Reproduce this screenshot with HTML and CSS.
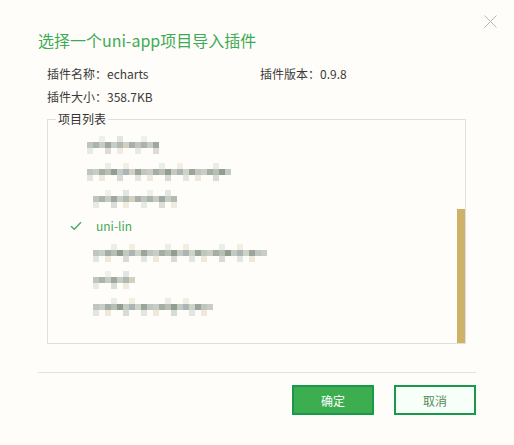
FILE: index.html
```html
<!DOCTYPE html>
<html lang="zh-CN">
<head>
<meta charset="utf-8">
<title>导入插件</title>
<link rel="stylesheet" href="styles.css">
</head>
<body>
<div class="dialog">
  <button class="close" aria-label="关闭">
    <svg width="13" height="13" viewBox="0 0 13 13"><path d="M0.5 0.5L12.5 12.5M12.5 0.5L0.5 12.5" stroke="#b4b4b4" stroke-width="1" fill="none"/></svg>
  </button>
  <h1 class="title">选择一个uni-app项目导入插件</h1>
  <div class="info">
    <div>插件名称：echarts</div>
    <div>插件版本：0.9.8</div>
    <div>插件大小：358.7KB</div>
  </div>
  <fieldset class="projects">
    <legend>项目列表</legend>
    <ul class="list">
      <li class="item"><span class="check"></span><span class="blur w72 shift"></span></li>
      <li class="item"><span class="check"></span><span class="blur w144 shift alt"></span></li>
      <li class="item"><span class="check"></span><span class="blur w84"></span></li>
      <li class="item selected"><span class="check"><svg width="12" height="10" viewBox="0 0 12 10"><path d="M1 5.2L4.3 8.3L11 1.2" stroke="#3fae5e" stroke-width="1.4" fill="none"/></svg></span><span class="name">uni-lin</span></li>
      <li class="item"><span class="check"></span><span class="blur w174 alt"></span></li>
      <li class="item"><span class="check"></span><span class="blur w42"></span></li>
      <li class="item"><span class="check"></span><span class="blur w120 alt"></span></li>
    </ul>
    <div class="thumb"></div>
  </fieldset>
  <div class="footer">
    <button class="btn primary">确定</button>
    <button class="btn ghost">取消</button>
  </div>
</div>
</body>
</html>
```

FILE: styles.css
```css
* { box-sizing: border-box; }
html, body {
  margin: 0;
  padding: 0;
  background: #fffdf9;
}
body {
  font-family: "Noto Sans CJK SC", "Noto Sans", sans-serif;
  color: #3c3c3c;
}
.dialog {
  position: relative;
  width: 514px;
  height: 445px;
  padding: 28px 38px 0 38px;
}
.close {
  position: absolute;
  top: 15px;
  right: 17px;
  width: 13px;
  height: 13px;
  padding: 0;
  border: 0;
  background: none;
  display: block;
}
.close svg { display: block; }
.title {
  margin: 0;
  font-size: 16px;
  line-height: 24px;
  font-weight: normal;
  color: #3eaa55;
}
.info {
  margin-top: 10px;
  padding-left: 9px;
  display: grid;
  grid-template-columns: 213px auto;
  font-size: 12px;
  line-height: 23px;
  color: #3a3a3a;
}
.projects {
  position: relative;
  margin: 3px 0 0 9px;
  padding: 0;
  width: 419px;
  height: 233px;
  border: 1px solid #e0dfdf;
  min-width: 0;
}
.projects legend {
  margin-left: 8px;
  padding: 0 2px;
  font-size: 12px;
  line-height: 16px;
  color: #333;
}
.list {
  list-style: none;
  margin: 0;
  padding: 4px 0 0 0;
}
.item {
  height: 27px;
  display: flex;
  align-items: center;
  padding-left: 22px;
}
.check {
  width: 12px;
  height: 10px;
  margin-right: 14px;
  flex: none;
}
.check svg { display: block; }
.name {
  font-size: 12px;
  color: #45a85c;
}
.blur {
  display: block;
  height: 18px;
  margin-left: -3px;
  background:
    repeating-linear-gradient(90deg, transparent 0 12px, #eef0ea 12px 18px, transparent 18px 30px, #e2e6e2 30px 36px, transparent 36px 42px) 0 0 / 100% 6px no-repeat,
    repeating-linear-gradient(90deg, #c1c6bc 0 6px, #aab4ae 6px 12px, #c8cbc0 12px 18px, #9ea89f 18px 24px, #c5cdc7 24px 30px, #b3b9ae 30px 36px, #d4d0c0 36px 42px, #a7b0ab 42px 48px) 0 6px / 100% 6px no-repeat,
    repeating-linear-gradient(90deg, #e7ebe6 0 6px, transparent 6px 18px, #dcdcd8 18px 24px, transparent 24px 30px, #f0ebe0 30px 36px, transparent 36px 48px) 0 12px / 100% 6px no-repeat;
}
.blur.alt {
  background:
    repeating-linear-gradient(90deg, transparent 0 18px, #e9eee9 18px 24px, transparent 24px 36px, #f2eee0 36px 42px, transparent 42px 54px) 0 0 / 100% 6px no-repeat,
    repeating-linear-gradient(90deg, #bfc6bd 0 6px, #c9cdc5 6px 12px, #a3aea6 12px 18px, #b9bfb0 18px 24px, #8f9d92 24px 30px, #c4c9c2 30px 36px, #aab6b6 36px 42px, #d0d2c6 42px 48px, #9aa69c 48px 54px) 0 6px / 100% 6px no-repeat,
    repeating-linear-gradient(90deg, #e2e6e0 0 6px, transparent 6px 12px, #f1e8dc 12px 18px, transparent 18px 30px, #d8dcd6 30px 36px, transparent 36px 48px) 0 12px / 100% 6px no-repeat;
}
.blur.shift { margin-left: -9px; }
.w42 { width: 42px; }
.w72 { width: 72px; }
.w84 { width: 84px; }
.w120 { width: 120px; }
.w144 { width: 144px; }
.w174 { width: 174px; }
.thumb {
  position: absolute;
  right: 0;
  bottom: 0;
  width: 8px;
  height: 134px;
  background: #cdb268;
}
.footer {
  margin-top: 28px;
  border-top: 1px solid #e2e2e2;
  padding-top: 12px;
  display: flex;
  justify-content: flex-end;
  gap: 20px;
}
.btn {
  width: 82px;
  height: 30px;
  font-family: inherit;
  font-size: 12px;
  padding: 0;
  border: 2px solid #199a4a;
  cursor: pointer;
}
.primary {
  background: #3cae50;
  color: #fff;
}
.ghost {
  background: #f7fff9;
  color: #5a8a56;
}
```
